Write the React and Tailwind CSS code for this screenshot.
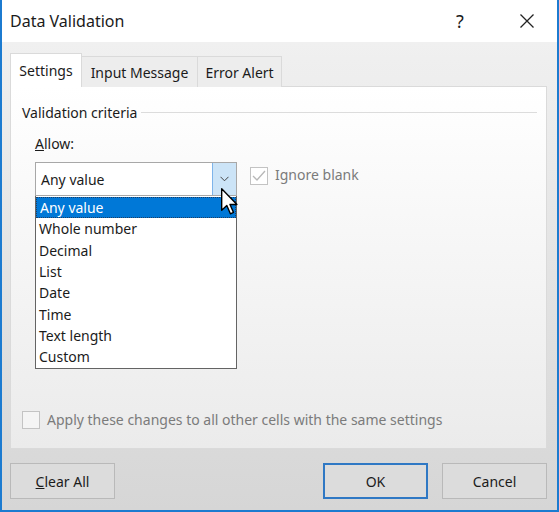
import React from "react";

const FONT = { fontFamily: '"Noto Sans", "Open Sans", sans-serif' };

const OPTIONS = ["Any value", "Whole number", "Decimal", "List", "Date", "Time", "Text length", "Custom"];

// Windows arrow pointer sitting over the dropdown button
function Cursor() {
  return (
    <svg className="absolute left-[219px] top-[188px]" width="18" height="28" viewBox="0 0 13 20">
      <path d="M0.5 0.5 L0.5 16 L4.2 12.5 L6.8 18.5 L9 17.5 L6.5 11.8 L11.5 11.8 Z" fill="#fff" stroke="#000" strokeWidth="1" strokeLinejoin="round" />
    </svg>
  );
}

function Button({ children, primary }) {
  return (
    <button
      className={`w-[105px] h-[36px] text-[14px] text-[#1b1b1b] bg-[#dcdcdc] border ${
        primary ? "border-[#2f78c4] border-2" : "border-[#b9b9b9]"
      }`}
    >
      {children}
    </button>
  );
}

export default function App() {
  return (
    <div
      className="relative w-[559px] h-[512px] border-x-2 border-b-2 border-[#1c7bd0] flex flex-col text-[#1b1b1b]"
      style={FONT}
    >
      {/* Title bar */}
      <div className="h-[42px] bg-white flex items-center pl-[8px]">
        <span className="text-[16px] flex-1">Data Validation</span>
        <span className="text-[18px] w-[20px] mr-[49px] text-center">?</span>
        <svg className="mr-[22px]" width="16" height="16" viewBox="0 0 16 16">
          <path d="M1.5 1.5 L14.5 14.5 M14.5 1.5 L1.5 14.5" stroke="#222" strokeWidth="1.3" />
        </svg>
      </div>

      {/* Body */}
      <div className="flex-1 flex flex-col pl-[8px] pr-[10px] pt-[11px] pb-[11px] bg-gradient-to-b from-[#f0f0f0] to-[#d6d6d6]">
        {/* Tabs */}
        <div className="flex items-end h-[34px] relative z-10">
          <div className="w-[72px] h-[34px] bg-white border border-b-0 border-[#dadada] flex items-center justify-center text-[14px]">
            Settings
          </div>
          <div className="w-[116px] h-[31px] bg-[#ededed] border-t border-r border-[#dadada] flex items-center justify-center text-[14px]">
            Input Message
          </div>
          <div className="w-[84px] h-[31px] bg-[#ededed] border-t border-r border-[#dadada] flex items-center justify-center text-[14px]">
            Error Alert
          </div>
        </div>

        {/* Panel */}
        <div className="-mt-px h-[363px] w-[537px] border border-[#dadada] bg-gradient-to-b from-white to-[#ebebeb] flex flex-col pl-[11px] pr-[9px] pt-[15px] pb-[18px]">
          <div className="flex items-center gap-[4px] h-[20px]">
            <span className="text-[14px]">Validation criteria</span>
            <div className="flex-1 h-px bg-[#dcdcdc]" />
          </div>

          <div className="pl-[13px] mt-[12px] text-[14px] h-[20px] leading-[20px]">
            <span className="underline">A</span>llow:
          </div>

          <div className="flex pl-[13px] mt-[8px]">
            <div className="w-[202px] flex flex-col">
              {/* combo */}
              <div className="h-[34px] border border-[#a8a8a8] bg-white flex items-center">
                <span className="flex-1 pl-[5px] text-[14px]">Any value</span>
                <div className="w-[24px] h-[32px] bg-[#cce4f7] border-l border-[#7eb4ea] flex items-center justify-center">
                  <svg width="9" height="6" viewBox="0 0 9 6">
                    <path d="M0.5 0.8 L4.5 4.8 L8.5 0.8" fill="none" stroke="#444" strokeWidth="1" />
                  </svg>
                </div>
              </div>
              {/* dropdown list */}
              <div className="border border-t-0 border-[#646464] bg-white h-[173px] pt-[1px] flex flex-col">
                {OPTIONS.map((o, i) => (
                  <div
                    key={o}
                    className={`h-[21.3px] flex items-center pl-[3px] text-[14px] ${
                      i === 0 ? "bg-[#0078d7] text-white border border-dotted border-[#1d3f66]" : ""
                    }`}
                  >
                    {o}
                  </div>
                ))}
              </div>
            </div>

            <div className="ml-[13px] mt-[5px] flex items-start gap-[7px]">
              <div className="w-[18px] h-[18px] border border-[#c3c3c3] bg-white flex items-center justify-center">
                <svg width="14" height="12" viewBox="0 0 14 12">
                  <path d="M1 6 L5 10 L13 1" fill="none" stroke="#b8b8b8" strokeWidth="1.3" />
                </svg>
              </div>
              <span className="text-[14px] text-[#7b7b7b] leading-[16px]">Ignore blank</span>
            </div>
          </div>

          <div className="mt-auto flex items-center gap-[7px]">
            <div className="w-[18px] h-[18px] border border-[#c3c3c3] bg-[#f4f4f4]" />
            <span className="text-[14px] text-[#7b7b7b]">Apply these changes to all other cells with the same settings</span>
          </div>
        </div>

        {/* Buttons */}
        <div className="flex mt-[14px]">
          <Button>
            <span className="underline">C</span>lear All
          </Button>
          <div className="flex-1" />
          <Button primary>OK</Button>
          <div className="w-[14px]" />
          <Button>Cancel</Button>
        </div>
      </div>

      <Cursor />
    </div>
  );
}
